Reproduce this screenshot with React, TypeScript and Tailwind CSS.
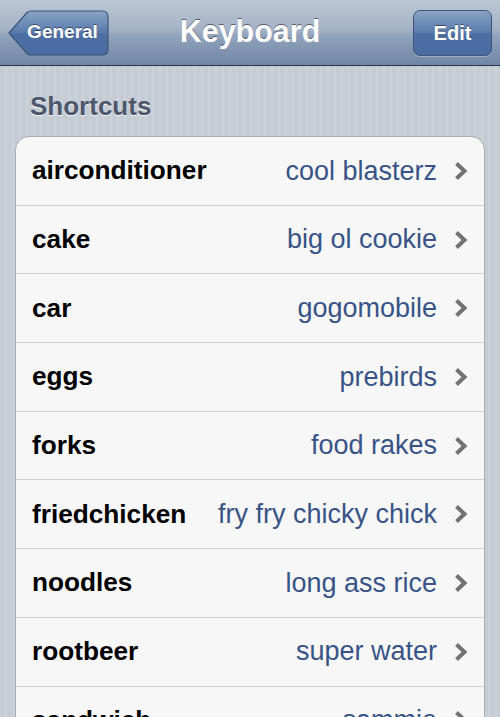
import React from "react";

const shortcuts = [
  { phrase: "airconditioner", value: "cool blasterz" },
  { phrase: "cake", value: "big ol cookie" },
  { phrase: "car", value: "gogomobile" },
  { phrase: "eggs", value: "prebirds" },
  { phrase: "forks", value: "food rakes" },
  { phrase: "friedchicken", value: "fry fry chicky chick" },
  { phrase: "noodles", value: "long ass rice" },
  { phrase: "rootbeer", value: "super water" },
  { phrase: "sandwich", value: "sammie" },
];

function BackButton({ label }: { label: string }) {
  return (
    <button className="relative h-[46px] w-[101px] flex items-center justify-center pl-[8px]">
      <svg className="absolute inset-0" width="101" height="46" viewBox="0 0 101 46">
        <defs>
          <linearGradient id="backFill" x1="0" y1="0" x2="0" y2="1">
            <stop offset="0" stopColor="#8aa3c6" />
            <stop offset="0.5" stopColor="#587aab" />
            <stop offset="0.52" stopColor="#4b6ea3" />
            <stop offset="1" stopColor="#4a6ca2" />
          </linearGradient>
        </defs>
        <path
          d="M1 23 L19 2.5 Q20.5 1 23 1 L94 1 Q100 1 100 7 L100 39 Q100 45 94 45 L23 45 Q20.5 45 19 43.5 Z"
          fill="url(#backFill)"
          stroke="#3d5577"
          strokeWidth="1.2"
        />
      </svg>
      <span className="relative text-white font-bold text-[19px] [text-shadow:0_-1px_0_rgba(0,0,0,0.45)]">{label}</span>
    </button>
  );
}

function Chevron() {
  return (
    <svg width="16" height="20" viewBox="0 0 16 20" className="shrink-0">
      <path d="M3.5 2.5 L11.5 10 L3.5 17.5" fill="none" stroke="#727272" strokeWidth="4" strokeLinejoin="miter" />
    </svg>
  );
}

export default function App() {
  return (
    <div className="w-[500px] h-[717px] overflow-hidden font-['Liberation_Sans',Arial,sans-serif] bg-[repeating-linear-gradient(90deg,#c5ccd4_0,#c5ccd4_5px,#cbd2d9_5px,#cbd2d9_7px)]">
      <header className="h-[66px] grid grid-cols-[1fr_auto_1fr] items-center px-[8px] border-b-[1.5px] border-[#2c3544] bg-[linear-gradient(to_bottom,#bcc7d5_0%,#a4b3c7_45%,#91a3bc_55%,#6f86a4_100%)]">
        <div className="flex justify-start">
          <BackButton label="General" />
        </div>
        <h1 className="text-white font-bold text-[30.5px] [text-shadow:0_-1px_0_rgba(0,0,0,0.5)] -mt-[1px]">Keyboard</h1>
        <div className="flex justify-end">
          <button className="h-[46px] w-[79px] rounded-[7px] border border-[#3d5577] bg-[linear-gradient(to_bottom,#8aa3c6_0%,#587aab_50%,#4b6ea3_52%,#4a6ca2_100%)] text-white font-bold text-[20px] [text-shadow:0_-1px_0_rgba(0,0,0,0.45)] shadow-[0_1px_0_rgba(255,255,255,0.3)]">
            Edit
          </button>
        </div>
      </header>

      <div className="px-[15px] pt-[27px]">
        <h2 className="pl-[15px] text-[26px] font-bold text-[#4c566c] [text-shadow:0_1px_0_rgba(255,255,255,0.9)] leading-none mb-[17px]">
          Shortcuts
        </h2>
        <ul className="rounded-[14px] border border-[#a9acb1] bg-[#f7f7f7] overflow-hidden shadow-[0_1px_0_rgba(255,255,255,0.8)]">
          {shortcuts.map((s) => (
            <li
              key={s.phrase}
              className="h-[68.7px] flex items-center pl-[16px] pr-[15px] border-b border-[#cfcfcf] gap-3"
            >
              <span className="font-bold text-[26.2px] text-black flex-1 whitespace-nowrap">{s.phrase}</span>
              <span className="text-[27px] text-[#385487] whitespace-nowrap">{s.value}</span>
              <span className="ml-[4px]">
                <Chevron />
              </span>
            </li>
          ))}
        </ul>
      </div>
    </div>
  );
}
